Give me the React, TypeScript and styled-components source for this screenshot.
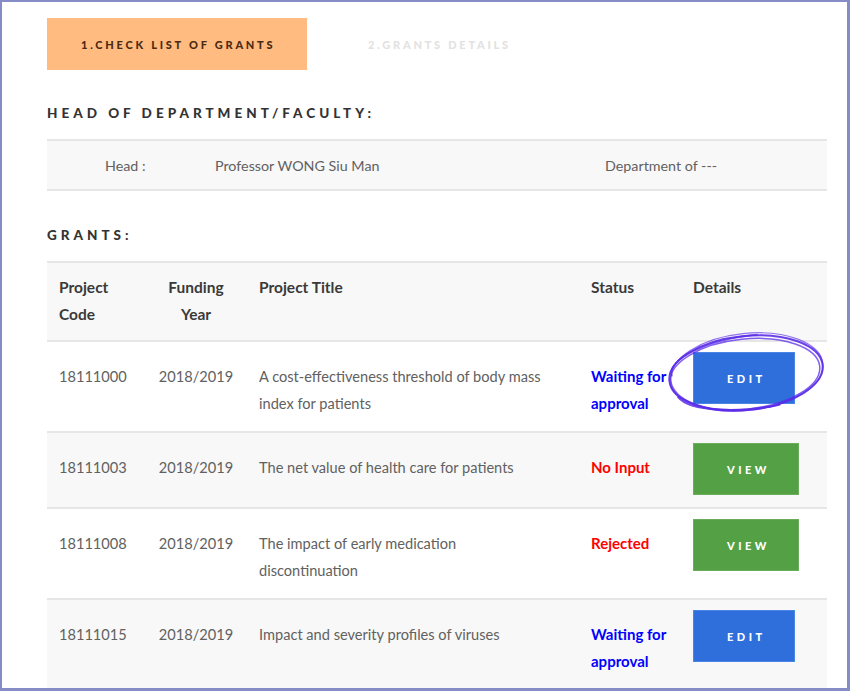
import React from 'react';
import styled, { createGlobalStyle } from 'styled-components';

const GlobalStyle = createGlobalStyle`
  html, body { margin: 0; padding: 0; height: 691px; overflow: hidden; background: #fff; }
  body { font-family: Lato, "Open Sans", sans-serif; }
`;

const Frame = styled.div`
  box-sizing: border-box;
  width: 850px;
  height: 691px;
  border: solid #868cc6;
  border-width: 2px 3px 3px 2px;
  overflow: hidden;
  padding: 16px 20px 0 45px;
`;

const Tabs = styled.div`
  display: flex;
  align-items: center;
`;

const Tab = styled.div<{ $active?: boolean }>`
  height: 52px;
  display: flex;
  align-items: center;
  padding: 0 0 0 34px;
  box-sizing: border-box;
  white-space: nowrap;
  width: ${p => (p.$active ? '260px' : 'auto')};
  background: ${p => (p.$active ? '#ffbb80' : 'transparent')};
  color: ${p => (p.$active ? '#4a2a12' : '#e2e2e2')};
  font-family: Lato, sans-serif;
  font-weight: 900;
  font-size: 11px;
  letter-spacing: 2.75px;
  margin-left: ${p => (p.$active ? '0' : '27px')};
`;

const SectionTitle = styled.h2<{ $top: number }>`
  margin: ${p => p.$top}px 0 17px;
  font-family: Lato, sans-serif;
  font-weight: 900;
  font-size: 13.5px;
  line-height: 18px;
  letter-spacing: 4px;
  color: #333;
`;

const HeadBox = styled.div`
  display: flex;
  align-items: center;
  height: 52px;
  box-sizing: border-box;
  background: #f8f8f8;
  border-top: 2px solid #e6e6e6;
  border-bottom: 2px solid #e6e6e6;
  color: #616161;
  font-size: 14.3px;
`;

const HeadCell = styled.span<{ $w: number; $pl: number }>`
  width: ${p => p.$w}px;
  padding-left: ${p => p.$pl}px;
  box-sizing: border-box;
`;

const Table = styled.table`
  width: 780px;
  table-layout: fixed;
  border-collapse: collapse;
  border-top: 2px solid #e6e6e6;
  font-size: 14.6px;
  line-height: 27px;
`;

const Row = styled.tr<{ $shade?: boolean }>`
  background: ${p => (p.$shade ? '#f8f8f8' : '#fff')};
  border-bottom: 2px solid #e6e6e6;
`;

const Th = styled.th<{ $w: number; $center?: boolean }>`
  box-sizing: border-box;
  width: ${p => p.$w}px;
  text-align: ${p => (p.$center ? 'center' : 'left')};
  vertical-align: top;
  padding: 11px 12px 12px;
  font-size: 15.5px;
  font-weight: 700;
  color: #3a3a3a;
`;

const Td = styled.td<{ $center?: boolean; $wide?: boolean }>`
  text-align: ${p => (p.$center ? 'center' : 'left')};
  vertical-align: top;
  padding: 21px ${p => (p.$wide ? '22px' : '12px')} 14px 12px;
  color: #616161;
`;

const ActionTd = styled.td`
  vertical-align: top;
  padding: 10px 12px 12px;
`;

const Status = styled.span<{ $kind: 'wait' | 'bad' }>`
  font-size: 15px;
  font-weight: 700;
  color: ${p => (p.$kind === 'wait' ? '#0000ff' : '#ff0000')};
`;

const BtnWrap = styled.span`
  position: relative;
  display: inline-block;
`;

const Button = styled.button<{ $kind: 'edit' | 'view' }>`
  display: flex;
  align-items: center;
  height: 52px;
  padding: 0 28px 0 33px;
  border: 1px solid ${p => (p.$kind === 'edit' ? '#4a85e6' : '#6aae5c')};
  background: ${p => (p.$kind === 'edit' ? '#2e6fdc' : '#54a145')};
  color: #fff;
  font-family: Lato, sans-serif;
  font-weight: 900;
  font-size: 11px;
  letter-spacing: 3.5px;
  cursor: pointer;
`;

const Scribble = styled.svg`
  position: absolute;
  left: -27px;
  top: -20px;
  width: 160px;
  height: 82px;
  pointer-events: none;
  overflow: visible;
`;

const Circle = () => (
  <Scribble viewBox="0 0 160 82">
    <g fill="none" stroke="#5a2ce8" strokeLinecap="round" transform="rotate(-6 80 41)">
      <ellipse cx="80" cy="41" rx="77" ry="37" strokeWidth="2" opacity="0.9" />
      <ellipse cx="79" cy="42" rx="75" ry="35" strokeWidth="1.5" opacity="0.75" />
      <ellipse cx="81" cy="40" rx="76.5" ry="38.5" strokeWidth="1.2" opacity="0.65" />
      <path d="M10 58 C 20 74, 70 80, 110 76" strokeWidth="2" opacity="0.85" />
      <path d="M6 36 C 4 20, 40 4, 95 4" strokeWidth="1.6" opacity="0.75" />
    </g>
  </Scribble>
);

type Grant = {
  code: string;
  year: string;
  title: string;
  status: 'wait' | 'no' | 'rej';
};

const grants: Grant[] = [
  { code: '18111000', year: '2018/2019', title: 'A cost-effectiveness threshold of body mass index for patients', status: 'wait' },
  { code: '18111003', year: '2018/2019', title: 'The net value of health care for patients', status: 'no' },
  { code: '18111008', year: '2018/2019', title: 'The impact of early medication discontinuation', status: 'rej' },
  { code: '18111015', year: '2018/2019', title: 'Impact and severity profiles of viruses', status: 'wait' },
];

export default function App() {
  return (
    <>
      <GlobalStyle />
      <Frame>
        <Tabs>
          <Tab $active>1.CHECK LIST OF GRANTS</Tab>
          <Tab>2.GRANTS DETAILS</Tab>
        </Tabs>
        <SectionTitle $top={34}>HEAD OF DEPARTMENT/FACULTY:</SectionTitle>
        <HeadBox>
          <HeadCell $w={168} $pl={58}>Head :</HeadCell>
          <HeadCell $w={390} $pl={0}>Professor WONG Siu Man</HeadCell>
          <HeadCell $w={222} $pl={0}>Department of ---</HeadCell>
        </HeadBox>
        <SectionTitle $top={35}>GRANTS:</SectionTitle>
        <Table>
          <thead>
            <Row $shade>
              <Th $w={98}>Project<br />Code</Th>
              <Th $w={102} $center>Funding<br />Year</Th>
              <Th $w={332}>Project Title</Th>
              <Th $w={102}>Status</Th>
              <Th $w={146}>Details</Th>
            </Row>
          </thead>
          <tbody>
            {grants.map((g, i) => (
              <Row key={g.code} $shade={i % 2 === 1}>
                <Td>{g.code}</Td>
                <Td $center>{g.year}</Td>
                <Td $wide>{g.title}</Td>
                <Td>
                  {g.status === 'wait' && <Status $kind="wait">Waiting for approval</Status>}
                  {g.status === 'no' && <Status $kind="bad">No Input</Status>}
                  {g.status === 'rej' && <Status $kind="bad">Rejected</Status>}
                </Td>
                <ActionTd>
                  <BtnWrap>
                    <Button $kind={g.status === 'wait' ? 'edit' : 'view'}>
                      {g.status === 'wait' ? 'EDIT' : 'VIEW'}
                    </Button>
                    {i === 0 && <Circle />}
                  </BtnWrap>
                </ActionTd>
              </Row>
            ))}
          </tbody>
        </Table>
      </Frame>
    </>
  );
}
